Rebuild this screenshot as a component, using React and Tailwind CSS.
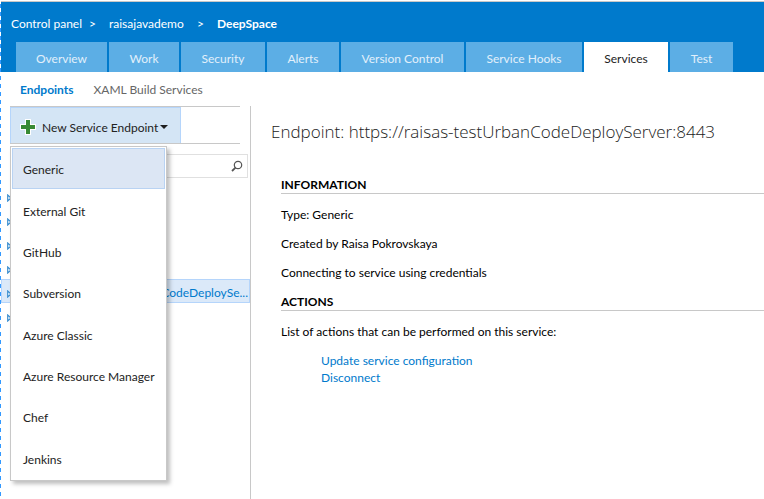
import React from "react";

const tabs = [
  ["Overview", "w-[91px]"],
  ["Work", "w-[70px]"],
  ["Security", "w-[84px]"],
  ["Alerts", "w-[72px]"],
  ["Version Control", "w-[123px]"],
  ["Service Hooks", "w-[116px]"],
  ["Services", "w-[84px]"],
  ["Test", "w-[63px]"],
];

const kinds = [
  "Generic",
  "External Git",
  "GitHub",
  "Subversion",
  "Azure Classic",
  "Azure Resource Manager",
  "Chef",
  "Jenkins",
];

const endpoints = ["", "", "", "", "CodeDeploySe...", ""];

function Header() {
  return (
    <header className="border-t border-[#c8c8c8] bg-[#007acc] text-white">
      <nav aria-label="Breadcrumb" className="flex h-10 items-center pt-[2px] pl-[10px]">
        <a href="#" className="w-[78px]">Control panel</a>
        <span className="w-5">&gt;</span>
        <a href="#" className="w-[88px]">raisajavademo</a>
        <span className="w-5">&gt;</span>
        <a href="#" className="font-bold">DeepSpace</a>
      </nav>
      <nav aria-label="Sections" className="flex gap-[2px] pl-[15px]">
        {tabs.map(([label, width]) => (
          <a
            key={label}
            href="#"
            className={`flex h-[30px] shrink-0 items-center justify-center whitespace-nowrap pt-[2px] ${width} ${
              label === "Services" ? "bg-white text-[#222222]" : "bg-[#5caee5] text-[#e2f0fb]"
            }`}
          >
            {label}
          </a>
        ))}
      </nav>
    </header>
  );
}

function TypeMenu() {
  return (
    <div
      role="menu"
      className="absolute top-full left-0 z-10 mt-[3px] flex h-[335px] w-[157px] flex-col border border-[#c8c8c8] bg-white p-px shadow-[3px_3px_4px_rgba(0,0,0,0.25)]"
    >
      {kinds.map((kind, i) => (
        <button
          key={kind}
          role="menuitem"
          className={`flex w-full flex-1 items-center border pt-[2px] pl-[10px] whitespace-nowrap text-[#222222] ${
            i === 0 ? "border-[#b9d3f3] bg-[#dce6f4]" : "border-transparent"
          }`}
        >
          {kind}
        </button>
      ))}
    </div>
  );
}

function Sidebar() {
  return (
    <aside className="w-[250px] shrink-0 border-r border-[#c8c8c8]">
      <div className="relative mr-[10px] ml-[9px] border-y border-[#c8c8c8]">
        <button className="flex h-9 w-[171px] items-center border border-b-0 border-[#b5d5fb] bg-[#d4e5f5] pt-[3px] pl-[9px] text-[#222222]">
          <svg width="16" height="16" viewBox="0 0 16 16" className="mr-[6px]">
            <path d="M5 0h6v5h5v6h-5v5H5v-5H0V5h5z" fill="#fff" />
            <path d="M6 1h4v5h5v4h-5v5H6v-5H1V6h5z" fill="#388a34" />
          </svg>
          <span className="w-[115px] text-left whitespace-nowrap">New Service Endpoint</span>
          <svg width="8" height="4" viewBox="0 0 8 4" className="ml-[3px]">
            <path d="M0 0h8L4 4z" fill="#1e1e1e" />
          </svg>
        </button>
        <TypeMenu />
      </div>
      <div className="mt-[10px] mr-[2px] ml-[9px] flex h-6 items-center border border-[#e0e0e0] pr-1">
        <input aria-label="Search endpoints" className="min-w-0 flex-1 outline-none" />
        <svg width="12" height="12" viewBox="0 0 12 12" fill="none" stroke="#555">
          <circle cx="7" cy="5" r="3.7" strokeWidth="1.2" />
          <path d="M4.5 7.7L1 11" strokeWidth="1.8" />
        </svg>
      </div>
      <ul className="mt-[5px]">
        {endpoints.map((name, i) => (
          <li
            key={i}
            className={`flex h-6 items-center border pt-[5px] pl-[5px] ${
              name ? "border-[#b5d5fb] bg-[#dbe9f9]" : "border-transparent"
            }`}
          >
            <svg width="5" height="8" viewBox="0 0 5 8" className="shrink-0">
              <path d="M.7 1v6L4 4z" fill="#fff" stroke="#3c8fd0" strokeWidth="1.2" />
            </svg>
            {name && (
              <a href="#" className="ml-auto pr-px pb-[2px] whitespace-nowrap text-[#007acc]">
                {name}
              </a>
            )}
          </li>
        ))}
      </ul>
    </aside>
  );
}

function Heading({ children }) {
  return <h2 className="border-b border-[#c8c8c8] font-bold leading-4">{children}</h2>;
}

function Details() {
  return (
    <main className="min-w-0 flex-1 pl-5 text-black">
      <h1 className="pt-[14px] font-['Open_Sans','Noto_Sans',sans-serif] text-[17px] leading-6 font-light whitespace-nowrap text-[#222222]">
        Endpoint: https://raisas-testUrbanCodeDeployServer:8443
      </h1>
      <div className="mt-[33px] pl-[10px] leading-[17px]">
        <Heading>INFORMATION</Heading>
        <p className="mt-3">Type: Generic</p>
        <p className="mt-3">Created by Raisa Pokrovskaya</p>
        <p className="mt-3">Connecting to service using credentials</p>
        <div className="mt-[13px]">
          <Heading>ACTIONS</Heading>
        </div>
        <p className="mt-3">List of actions that can be performed on this service:</p>
        <ul className="mt-3 pl-10 text-[#007acc]">
          <li><a href="#">Update service configuration</a></li>
          <li><a href="#">Disconnect</a></li>
        </ul>
      </div>
    </main>
  );
}

export default function App() {
  return (
    <div className="flex min-h-screen bg-white font-['Lato','Noto_Sans',sans-serif] text-[12px] leading-[17px]">
      <div className="w-px shrink-0 bg-[repeating-linear-gradient(to_bottom,#ffffff_0,#ffffff_4px,#3399ff_4px,#3399ff_8px)]" />
      <div className="flex min-w-0 flex-1 flex-col pt-px">
        <Header />
        <nav aria-label="Service pages" className="flex h-[34px] items-center gap-5 pt-px pl-[19px]">
          <a href="#" className="font-bold text-[#007acc]">Endpoints</a>
          <a href="#" className="text-[#666666]">XAML Build Services</a>
        </nav>
        <div className="flex flex-1">
          <Sidebar />
          <Details />
        </div>
      </div>
    </div>
  );
}
